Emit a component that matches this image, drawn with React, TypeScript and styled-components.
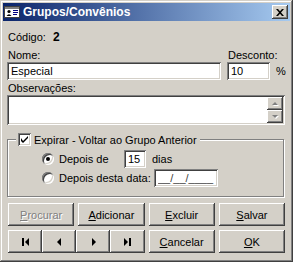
import { createGlobalStyle, styled } from 'styled-components';

const GlobalStyle = createGlobalStyle`
  html, body {
    margin: 0;
    padding: 0;
    background: #d4d0c8;
  }
  * {
    box-sizing: border-box;
  }
`;

const raised = `
  box-shadow: inset -1px -1px #404040, inset 1px 1px #fff,
    inset -2px -2px #808080, inset 2px 2px #d4d0c8;
`;

const sunken = `
  box-shadow: inset 1px 1px #808080, inset -1px -1px #fff,
    inset 2px 2px #404040, inset -2px -2px #d4d0c8;
`;

const Window = styled.div`
  width: 293px;
  height: 262px;
  padding: 3px 2px 2px 3px;
  background: #d4d0c8;
  box-shadow: inset -1px -1px #404040, inset 1px 1px #d4d0c8,
    inset -2px -2px #808080, inset 2px 2px #fff;
  font-family: 'Liberation Sans', Arial, sans-serif;
  font-size: 11px;
  color: #000;
  display: flex;
  flex-direction: column;
`;

const TitleBar = styled.div`
  height: 18px;
  margin-right: 1px;
  display: flex;
  align-items: center;
  padding: 0 2px 0 1px;
  background: linear-gradient(to right, #0a246a, #a6caf0);
`;

const TitleText = styled.span`
  flex: 1;
  margin-left: 3px;
  color: #fff;
  font-weight: bold;
  font-size: 12px;
`;

const CloseButton = styled.div`
  width: 16px;
  height: 14px;
  background: #d4d0c8;
  display: flex;
  align-items: center;
  justify-content: center;
  ${raised}
`;

const Body = styled.div`
  display: flex;
  flex-direction: column;
  padding: 10px 6px 0 4px;
`;

const CodeRow = styled.div`
  height: 13px;
  line-height: 13px;
  padding-left: 1px;
  display: flex;
  gap: 7px;
`;

const CodeValue = styled.b`
  font-size: 12px;
`;

const FieldRow = styled.div`
  display: flex;
  align-items: flex-end;
  gap: 6px;
  margin-top: 5px;
`;

const Field = styled.div<{ $width: number }>`
  width: ${(p) => p.$width}px;
  flex-shrink: 0;
  display: flex;
  flex-direction: column;
`;

const Label = styled.label<{ $gap?: number }>`
  height: 13px;
  line-height: 13px;
  padding-left: 1px;
  margin-top: ${(p) => p.$gap ?? 0}px;
  white-space: nowrap;
`;

const TextInput = styled.input<{ $width?: number; $muted?: boolean }>`
  width: ${(p) => (p.$width ? `${p.$width}px` : '100%')};
  flex-shrink: 0;
  height: 18px;
  border: none;
  outline: none;
  padding: 0 3px 0 4px;
  background: #fff;
  font-family: inherit;
  font-size: 11px;
  color: ${(p) => (p.$muted ? '#404040' : '#000')};
  ${sunken}
`;

const Percent = styled.span`
  height: 18px;
  line-height: 18px;
`;

const MemoBox = styled.div`
  height: 30px;
  padding: 2px;
  background: #fff;
  display: flex;
  justify-content: flex-end;
  ${sunken}
`;

const ScrollBar = styled.div`
  width: 16px;
  display: flex;
  flex-direction: column;
`;

const ScrollButton = styled.div`
  flex: 1;
  background: #d4d0c8;
  display: flex;
  align-items: center;
  justify-content: center;
  ${raised}
`;

const GroupBox = styled.fieldset`
  margin: 8px 0 0;
  padding: 0 8px;
  min-width: 0;
  border: 1px solid #808080;
  box-shadow: 1px 1px 0 #fff, inset 1px 1px 0 #fff;
  width: 277px;
`;

const Legend = styled.legend`
  height: 13px;
  padding: 0 3px 0 2px;
  background: #d4d0c8;
  display: flex;
  align-items: center;
  gap: 3px;
  white-space: nowrap;
`;

const CheckBox = styled.div`
  width: 13px;
  height: 13px;
  background: #fff;
  display: flex;
  align-items: center;
  justify-content: center;
  ${sunken}
`;

const GroupContent = styled.div`
  display: flex;
  flex-direction: column;
  gap: 2px;
  padding: 4px 0 10px 26px;
`;

const RadioRow = styled.div`
  display: flex;
  align-items: center;
  height: 17px;
`;

const Radio = styled.div<{ $checked?: boolean }>`
  width: 12px;
  height: 12px;
  flex-shrink: 0;
  border-radius: 50%;
  background: #fff;
  display: flex;
  align-items: center;
  justify-content: center;
  box-shadow: inset 1px 1px #808080, inset -1px -1px #fff,
    inset 2px 2px #404040, inset -2px -2px #d4d0c8;

  &::after {
    content: '';
    width: 4px;
    height: 4px;
    border-radius: 50%;
    background: ${(p) => (p.$checked ? '#000' : 'transparent')};
  }
`;

const RadioLabel = styled.span<{ $width: number }>`
  width: ${(p) => p.$width}px;
  flex-shrink: 0;
  padding-left: 5px;
  white-space: nowrap;
`;

const Suffix = styled.span`
  margin-left: 6px;
`;

const ButtonGrid = styled.div`
  display: grid;
  grid-template-columns: repeat(4, 1fr);
  grid-auto-rows: 23px;
  column-gap: 4px;
  row-gap: 4px;
  margin: 6px 0 0 1px;
`;

const Button = styled.div<{ $disabled?: boolean }>`
  background: #d4d0c8;
  display: flex;
  align-items: center;
  justify-content: center;
  color: ${(p) => (p.$disabled ? '#808080' : '#000')};
  text-shadow: ${(p) => (p.$disabled ? '1px 1px 0 #fff' : 'none')};
  ${raised}
`;

const NavGroup = styled.div`
  grid-column: span 2;
  display: grid;
  grid-template-columns: repeat(4, 1fr);
`;

const TitleIcon = () => (
  <svg width="16" height="16" viewBox="0 0 16 16">
    <rect x="0.5" y="2.5" width="15" height="11" fill="#fff" stroke="#404040" />
    <rect x="1" y="3" width="14" height="2" fill="#808080" />
    <circle cx="5" cy="7.5" r="1.6" fill="#000" />
    <path d="M2.5 12 Q5 8.5 7.5 12 Z" fill="#000" />
    <rect x="9" y="6" width="5" height="1" fill="#000080" />
    <rect x="9" y="8" width="5" height="1" fill="#000080" />
    <rect x="9" y="10" width="4" height="1" fill="#000080" />
  </svg>
);

const CloseGlyph = () => (
  <svg width="8" height="7" viewBox="0 0 8 7">
    <path d="M0 0h2l2 2.3L6 0h2L5 3.5 8 7H6L4 4.7 2 7H0l3-3.5z" fill="#000" />
  </svg>
);

const Arrow = ({ up }: { up?: boolean }) => (
  <svg width="8" height="5" viewBox="0 0 8 5">
    <polygon
      points={up ? '4,1 7,4 1,4' : '1,1 7,1 4,4'}
      transform="translate(1 1)"
      fill="#fff"
    />
    <polygon points={up ? '4,1 7,4 1,4' : '1,1 7,1 4,4'} fill="#808080" />
  </svg>
);

const Check = () => (
  <svg width="7" height="7" viewBox="0 0 7 7">
    <path d="M0 2v3l2 2 5-5V-0L2 5z" fill="#000" />
  </svg>
);

type NavKind = 'first' | 'prev' | 'next' | 'last';

const NavGlyph = ({ kind }: { kind: NavKind }) => (
  <svg width="7" height="8" viewBox="0 0 7 8">
    {kind === 'first' && (
      <>
        <rect x="0" y="0" width="2" height="8" />
        <polygon points="7,0 3,4 7,8" />
      </>
    )}
    {kind === 'prev' && <polygon points="5,0 1,4 5,8" />}
    {kind === 'next' && <polygon points="2,0 6,4 2,8" />}
    {kind === 'last' && (
      <>
        <polygon points="0,0 4,4 0,8" />
        <rect x="5" y="0" width="2" height="8" />
      </>
    )}
  </svg>
);

const App = () => {
  return (
    <>
      <GlobalStyle />
      <Window>
        <TitleBar>
          <TitleIcon />
          <TitleText>Grupos/Convênios</TitleText>
          <CloseButton>
            <CloseGlyph />
          </CloseButton>
        </TitleBar>
        <Body>
          <CodeRow>
            <span>Código:</span>
            <CodeValue>2</CodeValue>
          </CodeRow>
          <FieldRow>
            <Field $width={214}>
              <Label>Nome:</Label>
              <TextInput readOnly defaultValue="Especial" />
            </Field>
            <Field $width={43}>
              <Label>Desconto:</Label>
              <TextInput readOnly defaultValue="10" />
            </Field>
            <Percent>%</Percent>
          </FieldRow>
          <Label $gap={2}>Observações:</Label>
          <MemoBox>
            <ScrollBar>
              <ScrollButton>
                <Arrow up />
              </ScrollButton>
              <ScrollButton>
                <Arrow />
              </ScrollButton>
            </ScrollBar>
          </MemoBox>
          <GroupBox>
            <Legend>
              <CheckBox>
                <Check />
              </CheckBox>
              <span>Expirar - Voltar ao Grupo Anterior</span>
            </Legend>
            <GroupContent>
              <RadioRow>
                <Radio $checked />
                <RadioLabel $width={70}>Depois de</RadioLabel>
                <TextInput readOnly defaultValue="15" $width={22} />
                <Suffix>dias</Suffix>
              </RadioRow>
              <RadioRow>
                <Radio />
                <RadioLabel $width={100}>Depois desta data:</RadioLabel>
                <TextInput readOnly defaultValue="__/__/____" $width={64} $muted />
              </RadioRow>
            </GroupContent>
          </GroupBox>
          <ButtonGrid>
            <Button $disabled>
              <span>
                <u>P</u>rocurar
              </span>
            </Button>
            <Button>
              <span>
                <u>A</u>dicionar
              </span>
            </Button>
            <Button>
              <span>
                <u>E</u>xcluir
              </span>
            </Button>
            <Button>
              <span>
                <u>S</u>alvar
              </span>
            </Button>
            <NavGroup>
              <Button>
                <NavGlyph kind="first" />
              </Button>
              <Button>
                <NavGlyph kind="prev" />
              </Button>
              <Button>
                <NavGlyph kind="next" />
              </Button>
              <Button>
                <NavGlyph kind="last" />
              </Button>
            </NavGroup>
            <Button>
              <span>
                <u>C</u>ancelar
              </span>
            </Button>
            <Button>
              <span>
                <u>O</u>K
              </span>
            </Button>
          </ButtonGrid>
        </Body>
      </Window>
    </>
  );
};

export default App;
